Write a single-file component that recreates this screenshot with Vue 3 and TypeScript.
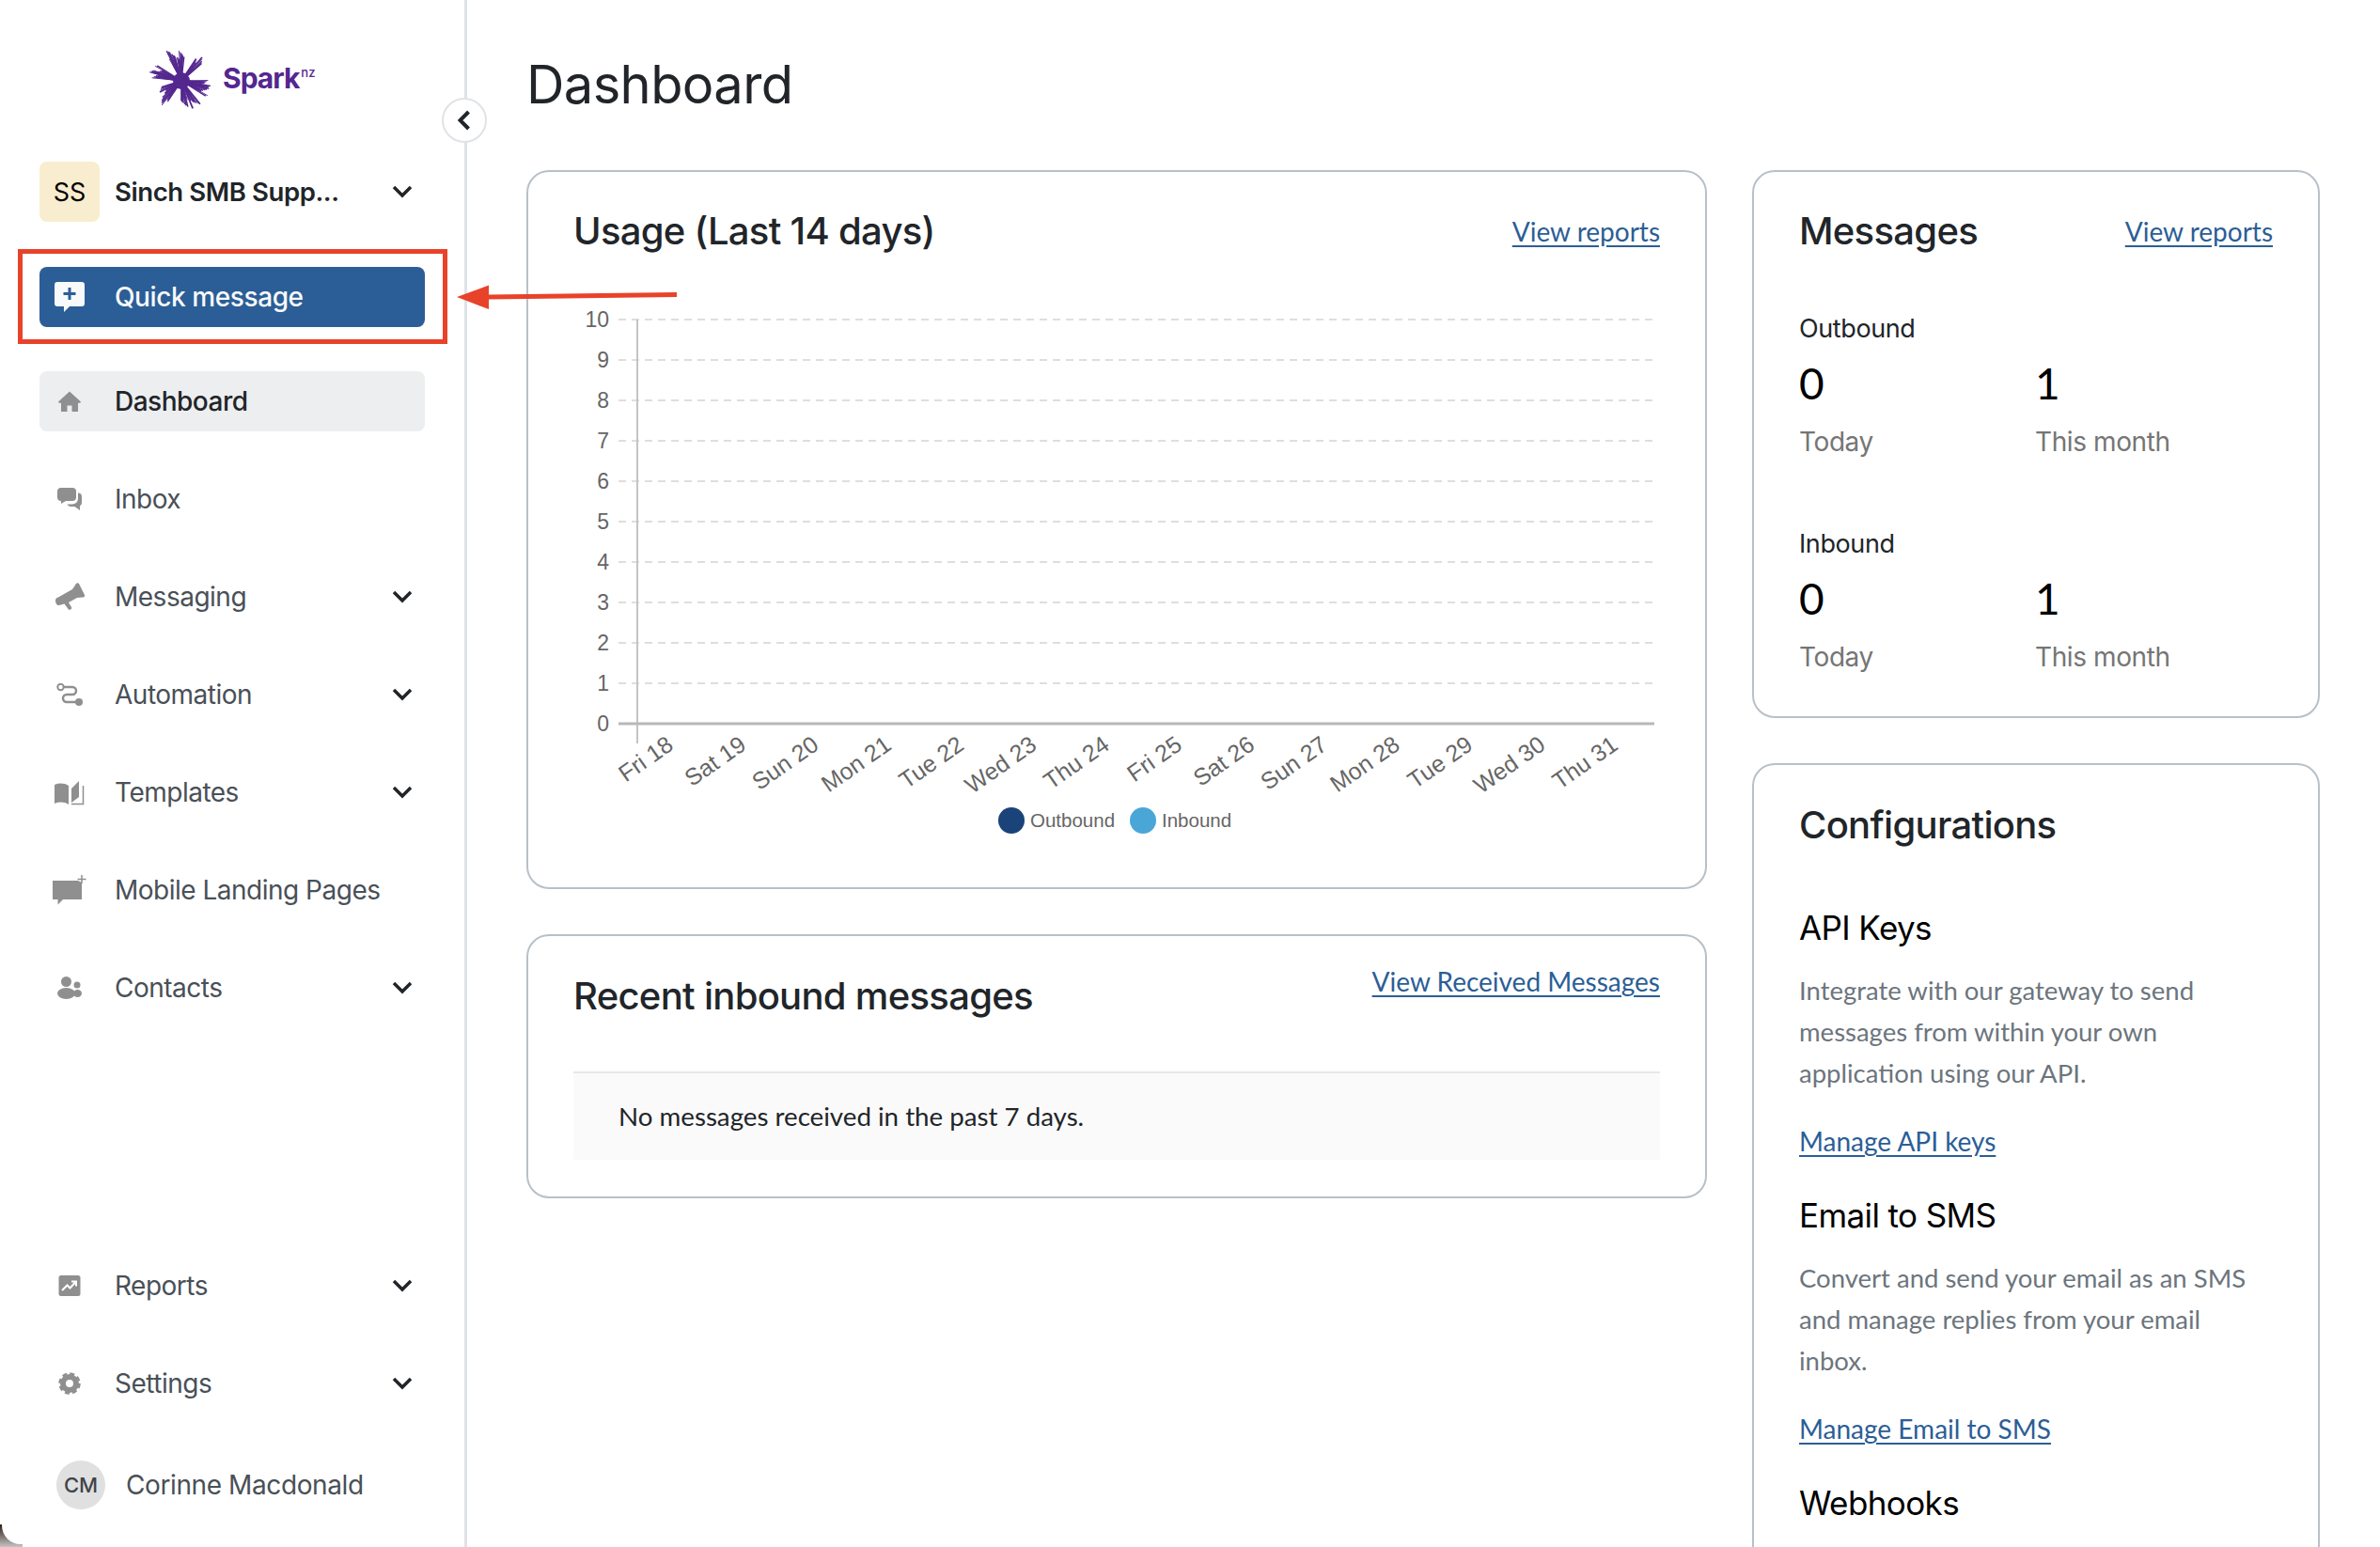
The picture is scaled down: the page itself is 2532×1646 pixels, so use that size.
<template>
  <div class="app">
    <aside class="sidebar">
      <div class="brand">
        <svg class="star" width="72" height="72" viewBox="-36 -36 72 72">
          <line
            v-for="(s, i) in starLines"
            :key="i"
            x1="0"
            y1="0"
            :x2="s.x"
            :y2="s.y"
            :stroke-width="s.w"
            stroke="#54278f"
          />
          <circle r="9" fill="#54278f" />
        </svg>
        <span class="brand-name">Spark</span><span class="brand-nz">nz</span>
      </div>

      <div class="org">
        <span class="org-avatar">SS</span>
        <span class="org-name">Sinch SMB Supp...</span>
        <svg class="chev" width="22" height="14" viewBox="0 0 22 14"><path d="M2 2l9 9 9-9" /></svg>
      </div>

      <button class="quick">
        <span class="icon-box">
          <svg width="32" height="32" viewBox="0 0 32 32">
            <path d="M3 0h26a3 3 0 0 1 3 3v20a3 3 0 0 1-3 3H16l-6 6v-6H3a3 3 0 0 1-3-3V3a3 3 0 0 1 3-3z" fill="#f8f9fa" />
            <path d="M16 6v13M9.5 12.5h13" stroke="#2b5e96" stroke-width="3" fill="none" />
          </svg>
        </span>
        Quick message
      </button>

      <nav class="nav">
        <a v-for="item in navTop" :key="item.label" class="nav-item" :class="{ active: item.active }">
          <span class="icon-box">
            <svg :width="item.w" :height="item.h" :viewBox="`0 0 ${item.w} ${item.h}`" class="nav-icon">
              <g v-html="item.svg"></g>
            </svg>
          </span>
          <span class="nav-label">{{ item.label }}</span>
          <svg v-if="item.more" class="chev" width="22" height="14" viewBox="0 0 22 14"><path d="M2 2l9 9 9-9" /></svg>
        </a>
      </nav>

      <nav class="nav nav-bottom">
        <a v-for="item in navBottom" :key="item.label" class="nav-item">
          <span class="icon-box">
            <svg :width="item.w" :height="item.h" :viewBox="`0 0 ${item.w} ${item.h}`" class="nav-icon">
              <g v-html="item.svg"></g>
            </svg>
          </span>
          <span class="nav-label">{{ item.label }}</span>
          <svg class="chev" width="22" height="14" viewBox="0 0 22 14"><path d="M2 2l9 9 9-9" /></svg>
        </a>
      </nav>

      <div class="user">
        <span class="user-avatar">CM</span>
        <span class="user-name">Corinne Macdonald</span>
      </div>

      <button class="collapse">
        <svg width="14" height="22" viewBox="0 0 14 22"><path d="M11.5 2l-9 9 9 9" /></svg>
      </button>
    </aside>

    <main class="main">
      <h1 class="title">Dashboard</h1>
      <div class="columns">
        <div class="col-left">
          <section class="card usage">
            <header class="card-head">
              <h2>Usage (Last 14 days)</h2>
              <a class="link">View reports</a>
            </header>
            <svg class="chart" width="1156" height="577" viewBox="0 0 1156 577">
              <line
                v-for="n in 10"
                :key="'g' + n"
                x1="48"
                x2="1150"
                :y1="yFor(n)"
                :y2="yFor(n)"
                stroke="#dedede"
                stroke-width="2"
                stroke-dasharray="8 6"
              />
              <line x1="68" x2="68" y1="20" y2="471" stroke="#c4c4c4" stroke-width="2" />
              <line x1="48" x2="1150" :y1="yFor(0)" :y2="yFor(0)" stroke="#b8b8b8" stroke-width="3" />
              <text v-for="n in 11" :key="'y' + n" x="38" :y="yFor(n - 1) + 8" class="tick" text-anchor="end">{{ n - 1 }}</text>
              <text
                v-for="(d, i) in days"
                :key="d"
                :x="xFor(i)"
                y="476"
                class="tick day"
                text-anchor="end"
                :transform="`rotate(-35 ${xFor(i)} 476)`"
              >{{ d }}</text>
              <circle cx="466" cy="553" r="14" fill="#1a4379" />
              <text x="486" y="560" class="legend">Outbound</text>
              <circle cx="606" cy="553" r="14" fill="#4ba6d8" />
              <text x="626" y="560" class="legend">Inbound</text>
            </svg>
          </section>

          <section class="card recent">
            <header class="card-head recent-head">
              <h2>Recent inbound messages</h2>
              <a class="link">View Received Messages</a>
            </header>
            <div class="empty">No messages received in the past 7 days.</div>
          </section>
        </div>

        <div class="col-right">
          <section class="card messages">
            <header class="card-head">
              <h2>Messages</h2>
              <a class="link">View reports</a>
            </header>
            <div v-for="group in stats" :key="group.label" class="stat-group">
              <div class="stat-label">{{ group.label }}</div>
              <div class="stat-row">
                <div class="stat">
                  <div class="stat-num">{{ group.today }}</div>
                  <div class="stat-cap">Today</div>
                </div>
                <div class="stat">
                  <div class="stat-num">{{ group.month }}</div>
                  <div class="stat-cap">This month</div>
                </div>
              </div>
            </div>
          </section>

          <section class="card config">
            <h2>Configurations</h2>
            <h3 class="api-title">API Keys</h3>
            <p>Integrate with our gateway to send messages from within your own application using our API.</p>
            <a class="link">Manage API keys</a>
            <h3>Email to SMS</h3>
            <p>Convert and send your email as an SMS and manage replies from your email inbox.</p>
            <a class="link">Manage Email to SMS</a>
            <h3>Webhooks</h3>
          </section>
        </div>
      </div>
    </main>

    <!-- annotation drawn on top of the screenshot -->
    <div class="red-box"></div>
    <svg class="red-arrow" width="240" height="30" viewBox="0 0 240 30">
      <path d="M0 14L34 1.5V11.5L234 9v5L34 16.5V27z" fill="#e8432a" />
    </svg>
    <div class="corner"></div>
  </div>
</template>

<script setup lang="ts">
interface NavItem {
  label: string
  w: number
  h: number
  svg: string
  more?: boolean
  active?: boolean
}

const navTop: NavItem[] = [
  {
    label: 'Dashboard',
    w: 24,
    h: 24,
    active: true,
    svg: '<path d="M12 1.5L24 12.5l-.8 1.2H21V23h-6.5v-6.5h-5V23H3v-9.3H.8L0 12.5z"/>',
  },
  {
    label: 'Inbox',
    w: 26,
    h: 24,
    svg: '<path d="M4 0h12a4 4 0 0 1 4 4v6a4 4 0 0 1-4 4H9l-5 3v-3a4 4 0 0 1-4-4V4a4 4 0 0 1 4-4z"/><path d="M22 5.500a4 4 0 0 1 4 4V16a4 4 0 0 1-2 3.300V24l-5.500-4H14a4 4 0 0 1-3.500-2.500H16a6 6 0 0 0 6-6z"/>',
  },
  {
    label: 'Messaging',
    w: 31,
    h: 30,
    more: true,
    svg: '<path d="M0 19c0-2 1-3 3-3.500L18 7l4-6c1-1.200 2-1 3 0l6 12c.5 1.500-.5 2.500-2 2.500l-6 .5-9 5 3 5c1 2-2 4-3.500 2L9.500 22.500 4 24c-2 .5-4-2-4-5z"/>',
  },
  {
    label: 'Automation',
    w: 28,
    h: 24,
    more: true,
    svg: '<circle cx="4.500" cy="4" r="3.200" fill="none" stroke="#8f8f8f" stroke-width="2"/><path d="M8 4h9a4 4 0 0 1 0 8h-6a4 4 0 0 0 0 8h11" fill="none" stroke="#8f8f8f" stroke-width="2.500"/><circle cx="24" cy="20" r="4"/>',
  },
  {
    label: 'Templates',
    w: 32,
    h: 27,
    more: true,
    svg: '<path d="M0 5c5-2 10-2 15 1v20c-5-3-10-3-15-1z"/><path d="M18 9l8-8v17l-8 6z"/><path d="M30.500 6v19.500H18" fill="none" stroke="#8f8f8f" stroke-width="1.500"/>',
  },
  {
    label: 'Mobile Landing Pages',
    w: 36,
    h: 32,
    svg: '<path d="M0 6h27l4 2v18H11l-5.500 5.500V26H0z"/><path d="M31 0v9M26.500 4.500h9" stroke="#8f8f8f" stroke-width="1.500" fill="none"/>',
  },
  {
    label: 'Contacts',
    w: 26,
    h: 24,
    more: true,
    svg: '<circle cx="9.500" cy="5.500" r="5.500"/><ellipse cx="9.500" cy="18" rx="9.500" ry="6"/><circle cx="21" cy="9" r="3.500"/><ellipse cx="21.500" cy="18" rx="4.500" ry="4"/>',
  },
]

const navBottom: NavItem[] = [
  {
    label: 'Reports',
    w: 24,
    h: 24,
    svg: '<rect x="0.500" y="1" width="23" height="22" rx="2.500"/><path d="M4 17l5.500-5.500 3 3L18.500 8M14 7.500h5v5" fill="none" stroke="#fff" stroke-width="2"/>',
  },
  {
    label: 'Settings',
    w: 24,
    h: 24,
    svg: '<circle cx="12" cy="12" r="7" fill="none" stroke="#8f8f8f" stroke-width="6"/><circle cx="12" cy="12" r="10.500" fill="none" stroke="#8f8f8f" stroke-width="2.500" stroke-dasharray="5 3.250"/>',
  },
]

const days = [
  'Fri 18', 'Sat 19', 'Sun 20', 'Mon 21', 'Tue 22', 'Wed 23', 'Thu 24',
  'Fri 25', 'Sat 26', 'Sun 27', 'Mon 28', 'Tue 29', 'Wed 30', 'Thu 31',
]

const stats = [
  { label: 'Outbound', today: 0, month: 1 },
  { label: 'Inbound', today: 0, month: 1 },
]

const yFor = (n: number) => 450 - n * 43
const xFor = (i: number) => 108 + i * 77.3

// arm end points of the logo, measured from its centre
const arms = [
  [-13, -33], [-1, -32], [22, -25], [31, 4], [29, 13], [16, 27], [4, 28], [-22, 25], [-23, 12], [-34, -8], [-29, -13],
]
const starLines = arms.flatMap(([x, y], a) => {
  const len = Math.hypot(x, y)
  return [-1, -0.66, -0.33, 0, 0.33, 0.66, 1].map((t, i) => {
    const k = 0.74 + 0.26 * (((a * 7 + i * 5) % 6) / 5)
    return {
      x: (x - (y / len) * t * 4.5) * k,
      y: (y + (x / len) * t * 4.5) * k,
      w: 1 + ((a + i) % 3) * 0.4,
    }
  })
})
</script>

<style>
html,
body {
  margin: 0;
  background: #fff;
}
</style>

<style scoped>
.app {
  position: relative;
  display: flex;
  width: 2532px;
  height: 1646px;
  overflow: hidden;
  background: #fff;
  font-family: Inter, "Noto Sans", sans-serif;
  color: #212529;
}

/* sidebar */
.sidebar {
  position: relative;
  display: flex;
  flex-direction: column;
  flex: none;
  box-sizing: border-box;
  width: 497px;
  height: 1646px;
  padding: 0 42px 40px 42px;
  border-right: 3px solid #dfe3e7;
}
.brand {
  display: flex;
  align-items: center;
  height: 172px;
  margin-left: 115px;
  color: #54278f;
}
.star {
  margin-right: 8px;
}
.brand-name {
  margin-top: -7px;
  font-size: 30px;
  font-weight: 700;
  letter-spacing: -1px;
}
.brand-nz {
  margin: -18px 0 0 2px;
  font-size: 13px;
  font-weight: 500;
}
.org {
  display: flex;
  align-items: center;
  height: 64px;
}
.org-avatar {
  display: flex;
  align-items: center;
  justify-content: center;
  width: 64px;
  height: 64px;
  margin-right: 16px;
  border-radius: 8px;
  background: #f9edcf;
  color: #000;
  font-size: 27px;
}
.org-name {
  font-size: 27.500px;
  font-weight: 600;
  letter-spacing: -0.4px;
}
.chev {
  margin-left: auto;
  margin-right: 13px;
}
.chev path {
  fill: none;
  stroke: #212529;
  stroke-width: 3.5;
}
.quick {
  display: flex;
  align-items: center;
  height: 64px;
  margin-top: 48px;
  padding: 0;
  border: 0;
  border-radius: 8px;
  background: #2b5e96;
  color: #f8f9fa;
  font: 500 28px Inter, "Noto Sans", sans-serif;
  letter-spacing: -0.4px;
}
.icon-box {
  display: flex;
  flex: none;
  align-items: center;
  justify-content: center;
  width: 64px;
  margin-right: 16px;
}
.nav {
  display: flex;
  flex-direction: column;
  gap: 40px;
  margin-top: 47px;
}
.nav-bottom {
  margin-top: auto;
}
.nav-item {
  display: flex;
  align-items: center;
  height: 64px;
  border-radius: 8px;
  color: #495057;
  font-size: 28px;
  letter-spacing: -0.5px;
}
.nav-item.active {
  background: #edeef0;
  color: #212529;
  font-weight: 500;
}
.nav-icon {
  fill: #8f8f8f;
}
.user {
  display: flex;
  align-items: center;
  margin: 50px 0 0 18px;
}
.user-avatar {
  display: flex;
  align-items: center;
  justify-content: center;
  width: 52px;
  height: 52px;
  margin-right: 22px;
  border-radius: 50%;
  background: #e0e0e0;
  color: #3e444a;
  font-size: 22px;
  font-weight: 500;
}
.user-name {
  color: #495057;
  font-size: 28px;
  letter-spacing: -0.4px;
}
.collapse {
  position: absolute;
  top: 104px;
  right: -24px;
  display: flex;
  align-items: center;
  justify-content: center;
  width: 48px;
  height: 48px;
  padding: 0;
  border: 2px solid #dfe3e7;
  border-radius: 50%;
  background: #fff;
}
.collapse path {
  fill: none;
  stroke: #212529;
  stroke-width: 4;
}

/* main */
.main {
  flex: 1;
  min-width: 0;
  padding: 0 64px 0 63px;
}
.title {
  height: 181px;
  margin: 0;
  font-size: 56px;
  font-weight: 400;
  line-height: 180px;
  letter-spacing: -0.6px;
}
.columns {
  display: flex;
  align-items: flex-start;
  gap: 48px;
}
.col-left {
  display: flex;
  flex-direction: column;
  gap: 48px;
  flex: none;
  width: 1256px;
}
.col-right {
  display: flex;
  flex-direction: column;
  gap: 48px;
  flex: none;
  width: 604px;
}
.card {
  box-sizing: border-box;
  padding: 0 48px;
  border: 2px solid #b8c0c8;
  border-radius: 24px;
  background: #fff;
}
.card h2 {
  margin: 0;
  font-size: 40px;
  font-weight: 500;
  letter-spacing: -0.7px;
  line-height: 48px;
}
.card-head {
  display: flex;
  align-items: center;
  justify-content: space-between;
  padding-top: 39px;
}
.link {
  color: #2b5e96;
  font-family: Lato, sans-serif;
  font-size: 28px;
  text-decoration: underline;
  text-underline-offset: 4px;
}

.usage {
  height: 765px;
}
.chart {
  display: block;
  margin-top: 50px;
}
.tick {
  fill: #666;
  font-family: "Liberation Sans", sans-serif;
  font-size: 23px;
}
.day {
  font-size: 25px;
}
.legend {
  fill: #666;
  font-family: "Liberation Sans", sans-serif;
  font-size: 20.500px;
}

.recent {
  height: 281px;
}
.recent-head {
  align-items: flex-start;
  box-sizing: content-box;
  height: 113px;
  padding-top: 31px;
}
.recent-head h2 {
  margin-top: 9px;
}
.empty {
  height: 92px;
  padding-left: 48px;
  border-top: 2px solid #e6e7e8;
  background: #fafafa;
  color: #212529;
  font-family: Lato, sans-serif;
  font-size: 27.700px;
  line-height: 92px;
}

.messages {
  height: 583px;
}
.stat-group {
  margin-top: 60px;
}
.stat-group + .stat-group {
  margin-top: 69px;
}
.stat-label {
  font-size: 27px;
  line-height: 40px;
  letter-spacing: -0.4px;
}
.stat-row {
  display: flex;
  margin-top: 8px;
}
.stat {
  width: 251px;
}
.stat-num {
  color: #000;
  font-family: Lato, sans-serif;
  font-size: 46px;
  line-height: 60px;
}
.stat-cap {
  margin-top: 12px;
  color: #757575;
  font-size: 28px;
  line-height: 40px;
  letter-spacing: -0.4px;
}

.config {
  height: 900px;
  padding-top: 40px;
}
.config h3 {
  margin: 34px 0 0;
  color: #000;
  font-size: 35px;
  font-weight: 400;
  letter-spacing: -0.6px;
  line-height: 46px;
}
.config .api-title {
  margin-top: 62px;
}
.config p {
  margin: 22px 0 28px;
  color: #6c757d;
  font-family: Lato, sans-serif;
  font-size: 27.500px;
  line-height: 44px;
}
.config .link {
  display: block;
  line-height: 44px;
}

/* annotation */
.red-box {
  position: absolute;
  top: 265px;
  left: 19px;
  box-sizing: border-box;
  width: 457px;
  height: 101px;
  border: 5px solid #e8432a;
}
.red-arrow {
  position: absolute;
  top: 302px;
  left: 486px;
}
.corner {
  position: absolute;
  left: 0;
  bottom: 0;
  width: 24px;
  height: 24px;
  background: linear-gradient(#2c1c14, #c4c4c4);
}
.corner::after {
  content: "";
  display: block;
  width: 24px;
  height: 24px;
  background: #fff;
  border-bottom-left-radius: 20px;
  transform: translate(2px, -3px);
}
</style>
